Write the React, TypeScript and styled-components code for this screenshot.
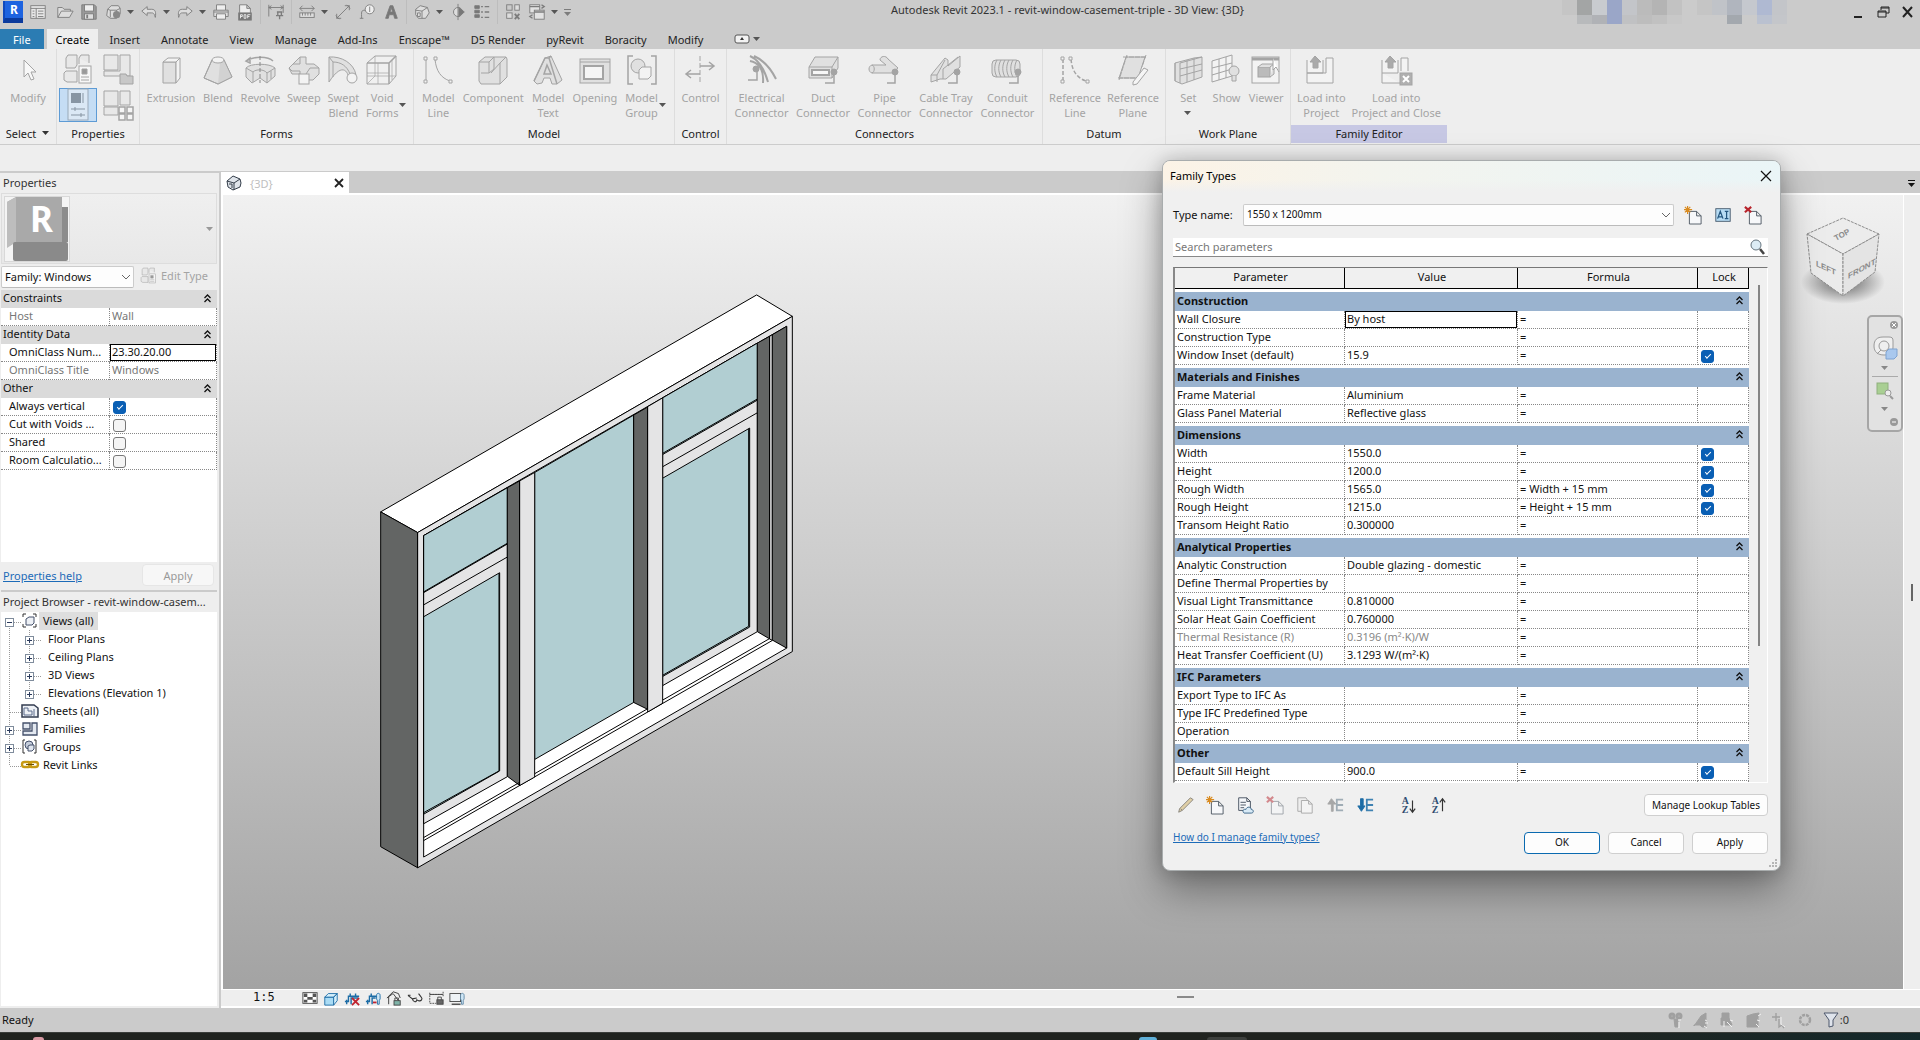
import React, { useState } from 'react';
import styled, { createGlobalStyle, css } from 'styled-components';

const GlobalStyle = createGlobalStyle`
  *, *::before, *::after { box-sizing: border-box; }
  html, body, #root { margin: 0; height: 100%; }
  body { overflow: hidden; background: #eeeeee; }
  body, button, input, select {
    font-family: "Noto Sans", "Open Sans", sans-serif;
    font-size: 11px;
    line-height: 15px;
    color: #111111;
  }
  button { border: 0; padding: 0; background: none; color: inherit; }
  table { border-collapse: separate; border-spacing: 0; }
  th { font-weight: 400; text-align: left; }
`;

/* ---------- drawing helpers ---------- */

const Drawing = styled.svg<{ $size?: number }>`
  display: block;
  flex: none;
  width: ${(p) => p.$size ?? 20}px;
  height: ${(p) => p.$size ?? 20}px;
  overflow: visible;
  fill: none;
  stroke: currentColor;
  stroke-width: 1;
`;

type Art = Record<string, React.ReactNode>;

const quickArt: Art = {
  home: <><rect x="2" y="3" width="16" height="14" fill="#e8e8e8" /><path d="M2 6h16M8 6v11M4 9h2M4 12h2M4 15h2M10 9h6M10 12h6M10 15h6" /></>,
  open: <path d="M2 16V5h5l2 2h7v2M2 16l4-7h13l-4 7H2z" fill="#dddddd" />,
  save: <><path d="M2 2h14l2 2v14H2z" fill="#999999" /><rect x="5" y="2" width="10" height="7" fill="#eeeeee" /><rect x="5" y="12" width="10" height="6" fill="#dddddd" /><path d="M8 13v4" strokeWidth="2" /></>,
  cloud: <><path d="M4 7l4-4h8l2 3v6l-4 5H7l-4-3z" fill="#dddddd" /><path d="M7 8h7v8M7 8v8M4 7l3 1M14 8l4-2" /><circle cx="14" cy="13" r="4" fill="#888888" stroke="none" /></>,
  undo: <path d="M2 9l6-5v3h5c4 0 5 3 4 9-1-4-2-5-4-5H8v3z" fill="#dddddd" />,
  redo: <path d="M18 9l-6-5v3H7c-4 0-5 3-4 9 1-4 2-5 4-5h5v3z" fill="#dddddd" />,
  print: <><path d="M5 8V2h10v6" fill="#eeeeee" /><path d="M2 8h16v7H2z" fill="#dddddd" /><path d="M5 12h10v6H5z" fill="#eeeeee" /><path d="M2 10h16" /></>,
  pdf: <><path d="M4 11V2h8l4 4v5M12 2v4h4" fill="#eeeeee" /><rect x="3" y="11" width="14" height="8" fill="#777777" /><path d="M5 17v-4h2v2H5M9 13v4h2v-4zM13 17v-4h3M13 15h2" stroke="#eeeeee" /></>,
  align: <><path d="M2 2v13M18 2v9M2 5h16M5 3L2 5l3 2M15 3l3 2-3 2" /><path d="M11 10h6M12 10v4h4v-4M10 14h8M14 14v4" strokeWidth="1.5" /></>,
  measure: <><path d="M2 6h16M5 3L2 6l3 3M15 3l3 3-3 3" /><rect x="2" y="11" width="16" height="5" fill="#dddddd" /><path d="M5 11v3M8 11v3M11 11v3M14 11v3" /></>,
  dim: <path d="M3 17L17 3M3 12v5h5M12 3h5v5M6 18l-4-4M14 2l4 4" />,
  tag: <><circle cx="13" cy="7" r="5" fill="#eeeeee" /><path d="M13 4v6M8 8c-5 0-4 2-4 9M2 17h4" /></>,
  text: <path d="M4 17L9 3h3l5 14h-3l-1-4H8l-1 4zM9 10h3l-2-5z" fill="#777777" />,
  house: <><path d="M3 7l5-4 8 2 2 6-4 6H6l-3-4z" fill="#dddddd" /><path d="M3 8l7 1 6-4M10 9v8M5 11h3v4H5z" /></>,
  section: <><circle cx="10" cy="10" r="5" fill="#dddddd" /><path d="M10 1v18" /><path d="M11 5l6 5-6 5z" fill="#777777" /></>,
  thin: <><path d="M2 3h5v3H2zM2 8h5v3H2zM2 13h5v3H2z" fill="#777777" /><path d="M9 4h2M13 4h5M9 10h2M13 10h5M9 16h2M13 16h5" strokeWidth="1.5" /></>,
  close: <><rect x="3" y="2" width="6" height="6" /><rect x="12" y="2" width="5" height="6" fill="#dddddd" /><rect x="3" y="11" width="6" height="6" fill="#dddddd" /><path d="M12 12l5 6M17 12l-5 6" strokeWidth="2" /></>,
  windows: <><rect x="2" y="2" width="11" height="9" fill="#e2e2e2" /><rect x="7" y="8" width="11" height="10" fill="#e2e2e2" /><path d="M2 4h11M7 10h11M15 2l3 2-3 2M5 13l-3 2 3 2" strokeWidth="1.5" /></>,
};

const F = '#e0e0e0';
const ribbonArt: Art = {
  modify: <path d="M12 6v17l4-4 3 7 3-1-3-7h5z" fill="#f8f8f8" />,
  extrusion: <><path d="M8 8h13v21H8z" fill={F} /><path d="M8 8l5-4h12l-4 4zM21 8l4-4v20l-4 5z" fill="#f3f3f3" /></>,
  blend: <><path d="M10 6L2 24l14 6 14-7L22 6z" fill={F} /><path d="M18 8l-2 22 14-7-8-17z" fill="#d2d2d2" stroke="none" /><ellipse cx="16" cy="6" rx="6" ry="3" fill="#f3f3f3" /><path d="M10 6L2 24l14 6 14-7L22 6" /></>,
  revolve: <><path d="M2 14c4-5 24-5 29 0v8l-8 7-7-5-8 5-6-6z" fill={F} /><path d="M2 14l7 4v10M31 14l-8 5v10M9 18c3-3 11-3 14 1M27 17v8" /><path d="M2 7c8-5 22-5 27 0M2 7l4-3v5z" strokeWidth="1.5" /><path d="M16 2v27" strokeDasharray="4 2" stroke="#888888" /></>,
  sweep: <><path d="M1 14l11-11h6v7h8l5 4v6l-6 6H12v-6H4z" fill={F} /><path d="M1 14l3 3h8v4M12 3v7H5M31 14h-9l-4 6" /><rect x="11" y="20" width="10" height="10" fill="#f3f3f3" /></>,
  swept: <><path d="M2 3c12-1 25 6 27 18h-8C19 15 13 11 2 28z" fill={F} /><path d="M2 3l4 5v15M6 8c8 0 14 4 17 12" /><circle cx="25" cy="24" r="5" fill="#f3f3f3" /></>,
  voids: <><path d="M1 9l8-7h21v20l-7 8H1z" fill="#f0f0f0" /><path d="M1 9h22v21M23 9l7-7" strokeWidth="1.5" /><path d="M9 2v20H1M9 22h21M1 30l8-8M12 9v21M1 19h22M26 6v20" strokeWidth=".7" /></>,
  line: <><path d="M4 5v22M13 5c1 12 6 19 15 22" /><path d="M2 3h3v3H2zM2 26h3v3H2zM12 3h3v3h-3zM27 26h3v3h-3z" fill="#f3f3f3" /></>,
  component: <><path d="M2 27V8l6-5h21l1 2v18l-7 7H4z" fill={F} /><path d="M2 8h10v11H4M12 8l5-5M23 30V9l6-6M17 3v12l-5 4M14 19l9-10" /></>,
  mtext: <><path d="M2 27L13 4l6-2 11 24-5 4h-5l-2-6h-6l-2 5-5 1z" fill={F} /><path d="M2 27L13 4h4l8 26M12 20l3-9 4 9zM17 4l2-2" strokeWidth="1.5" /></>,
  opening: <><rect x="1" y="5" width="30" height="24" fill={F} /><rect x="5" y="12" width="19" height="13" fill="#f5f5f5" strokeWidth="2" /><path d="M1 8h30" /></>,
  group: <><path d="M7 2H2v28h5M25 2h5v28h-5" strokeWidth="1.5" /><circle cx="12" cy="12" r="7" fill={F} /><path d="M13 16l3-3h9v9l-3 3h-9z" fill="#f3f3f3" /></>,
  control: <><path d="M16 2v28" strokeDasharray="5 2" /><path d="M16 12h13M25 8l5 4-5 4M16 20H3M7 16l-5 4 5 4" strokeWidth="1.5" /></>,
  electrical: <><path d="M4 2c9 4 14 12 18 26M8 2c9 4 17 13 22 23M4 7c10 2 14 9 13 22" strokeWidth="2" /><path d="M2 26h9V14" strokeWidth="1.5" /><circle cx="10" cy="15" r="3" fill="#a4a4a4" /></>,
  duct: <><path d="M2 13l6-10h23v11l-6 10H2z" fill={F} /><path d="M2 13h23v11M25 13l6-10" /><rect x="5" y="16" width="17" height="5" fill="#f7f7f7" strokeWidth="2" /><path d="M27 18v11h-9" strokeWidth="1.5" /><circle cx="27" cy="18" r="3" fill="#a4a4a4" /></>,
  pipe: <><path d="M12 6c0-4 6-5 8-1l10 9-6 5H4c-4-1-4-7 0-8h14z" fill={F} /><path d="M4 11c3 1 3 7 0 8" /><path d="M27 19v10h-8" strokeWidth="1.5" /><circle cx="27" cy="18" r="3" fill="#a4a4a4" /></>,
  tray: <><path d="M1 21L15 4l3 2v6L30 2v11L16 25h-6l-9 3z" fill={F} /><path d="M1 21h6l8-15M7 21v7M13 25V15L28 3" /><path d="M27 18v11h-9" strokeWidth="1.5" /><circle cx="27" cy="18" r="3" fill="#a4a4a4" /></>,
  conduit: <><rect x="1" y="6" width="28" height="17" rx="4" fill={F} /><path d="M6 6c-3 5-3 12 0 17M10 6c-3 5-3 12 0 17M14 6c-3 5-3 12 0 17M18 6c-3 5-3 12 0 17M22 6c-3 5-3 12 0 17M26 6c-3 5-3 12 0 17" /><path d="M27 18v11h-9" strokeWidth="1.5" /><circle cx="27" cy="18" r="3" fill="#a4a4a4" /></>,
  refline: <><path d="M4 5v22M12 5c1 12 6 19 15 22" strokeDasharray="4 2" strokeWidth="1.5" /><path d="M2 3h3v3H2zM2 26h3v3H2zM10 3h3v3h-3zM27 26h3v3h-3z" fill="#f3f3f3" /></>,
  refplane: <><path d="M9 3h19l-7 21H2z" fill={F} /><path d="M6 3h24M1 24h20M10 1L2 26M29 1l-4 12" strokeDasharray="5 1" /><path d="M16 28l11-14 4 2-11 14-4 1z" fill="#f5f5f5" /></>,
  set: <><path d="M3 9l19-5 8-1v20L10 30l-7-3z" fill={F} /><path d="M8 9v20M8 15l22-5M8 22l22-6M15 6v22M22 4v22M3 9v18M8 9L30 3" /></>,
  show: <><path d="M1 7l20-6v21L1 28z" fill="#f3f3f3" /><path d="M1 14l20-5M1 21l20-6M8 5v21M15 3v21" /><circle cx="23" cy="17" r="5" fill={F} /><path d="M21 22v5h4v-5" fill={F} /></>,
  viewer: <><rect x="2" y="3" width="27" height="26" fill="#f3f3f3" /><path d="M2 5h27" strokeWidth="3" /><rect x="8" y="13" width="12" height="10" fill="#bbbbbb" /><path d="M8 13l4-3h12l-4 3M20 23l4-3V10" fill={F} /><path d="M23 4v12l3-3 3 5" fill="#ffffff" /></>,
  load: <><path d="M2 6v13h16V6M2 19v10h26V4h-7v15" fill="#f3f3f3" /><path d="M10 2L5 8h3v6h5V8h3z" fill="#aaaaaa" /><path d="M2 19h19" /></>,
  loadclose: <><path d="M2 6v13h16V6M2 19v10h18M28 17V4h-7v13" fill="#f3f3f3" /><path d="M10 2L5 8h3v6h5V8h3z" fill="#aaaaaa" /><rect x="20" y="19" width="12" height="12" fill="#b0b0b0" /><path d="M23 22l6 6M29 22l-6 6" stroke="#ffffff" strokeWidth="2" /></>,
  ptypes: <><path d="M4 5l2-3h9v10l-2 3H4zM17 5l2-3h8v8M4 18h11v11H5l-3-2v-7z" fill="#e8e8e8" /><path d="M17 5v6" /><rect x="17" y="13" width="12" height="17" fill="#f7f7f7" /><path d="M20 16h5v5h-5z" fill="#999999" /><path d="M19 24h8M19 27h8" /></>,
  pcategory: <><path d="M2 2h14v15H2zM18 2h10v21H2v-5h16z" fill="#e8e8e8" /><path d="M18 21h6l1 2h6v8H18z" fill="#c8c8c8" /></>,
  props: <><rect x="6" y="0" width="20" height="31" fill="#dbe8f5" stroke="#9aa9b8" /><rect x="9" y="4" width="10" height="10" fill="#8795a3" stroke="none" /><path d="M21 4v10M9 20h14M9 26h14M13 18v4M19 24v4" stroke="#8795a3" /></>,
  pgrid: <><path d="M2 2h14v15H2zM18 2h10v14H18zM2 18h14v8H2z" fill="#e8e8e8" /><path d="M17 18h6v6h-6zM25 18h6v6h-6zM17 25h6v6h-6zM25 25h6v6h-6z" fill="#f5f5f5" strokeWidth="1.5" /></>,
};

const doc = <path d="M6 6h8l5 5v9H6zM14 6v5h5" fill="#f7f8fa" stroke="#4a5560" />;
const star = <path d="M4 0v9M0 4h9M1 1l6 6M7 1L1 7" stroke="#d98a1e" strokeWidth="1.3" />;
const dialogArt: Art = {
  newType: <>{doc}{star}</>,
  rename: <><rect x="2" y="3" width="16" height="14" fill="#b7dcf4" stroke="#44586b" /><path d="M4 14l3-8 3 8M5 12h4M12 6h4M14 6v8M12 14h4" stroke="#23567f" strokeWidth="1.4" /></>,
  deleteType: <>{doc}<path d="M1 1l7 6M8 1L1 7" stroke="#b8242c" strokeWidth="2.4" /></>,
  pencil: <path d="M3 18l1-4L16 2l3 2L7 16zM5 14l2 2" fill="#e0cfa6" stroke="#85817a" />,
  shared: <><path d="M3 2h9l4 4v10H3zM12 2v4h4" fill="#f5f7fa" stroke="#3f4b59" /><path d="M5 7h6M5 10h6M5 13h4" stroke="#3f4b59" /><path d="M9 19c-3-3 0-5 2-4 1-4 6-3 6 0 3 0 3 4 0 4z" fill="#d8eaf6" stroke="#356184" /></>,
  del: <g opacity=".5">{doc}<path d="M1 1l7 6M8 1L1 7" stroke="#b8242c" strokeWidth="2.4" /></g>,
  copy: <g opacity=".6"><path d="M2 2h9l2 3v12H2z" fill="#eeeeee" stroke="#777777" /><path d="M6 5h8l4 4v10H6zM14 5v4h4" fill="#f7f7f7" stroke="#777777" /></g>,
  up: <g opacity=".6"><path d="M6 17V9H2l4-6 5 6H8v8z" fill="#777777" stroke="#777777" /><path d="M12 3v14M12 4h7M12 10h7M12 16h7" stroke="#6b7f8e" strokeWidth="2" /></g>,
  down: <><path d="M5 3v8H2l4 6 4-6H8V3z" fill="#1c6ca6" stroke="#1c6ca6" /><path d="M12 3v14M12 4h7M12 10h7M12 16h7" stroke="#3f82b2" strokeWidth="2" /></>,
};
const sortLetters = (
  <g stroke="none" fill="#2f4c70" fontFamily="Liberation Serif, serif" fontSize="11" fontWeight="700">
    <text x="3" y="9">A</text><text x="3" y="19">Z</text>
  </g>
);
dialogArt.az = <>{sortLetters}<path d="M15 5v13M12 14l3 4 3-4" stroke="#333333" strokeWidth="1.3" /></>;
dialogArt.za = <>{sortLetters}<path d="M15 17V3M12 7l3-4 3 4" stroke="#333333" strokeWidth="1.3" /></>;

const viewArt: Art = {
  detail: <><rect x="1" y="3" width="16" height="12" fill="#ffffff" /><path d="M2 4h4v4H2zM12 4h4v4h-4zM6 8h6v3H6zM2 11h4v3H2zM12 11h4v3h-4z" fill="#555555" stroke="none" /></>,
  style: <><path d="M2 8h10v9H2z" fill="#aadcf5" stroke="#1c6ca6" /><path d="M2 8l4-4h10l-4 4zM12 8l4-4v8l-4 5z" fill="#d5effb" stroke="#1c6ca6" /></>,
  sun: <><path d="M1 13h4V7h12M7 4v4M13 4v4M3 11v5M8 16V9h8" stroke="#1c6ca6" strokeWidth="1.6" /><path d="M9 9l8 8M17 9l-8 8" stroke="#c02430" strokeWidth="2" /></>,
  shadow: <><path d="M1 13h4V7h9M7 4v4M3 11v5M8 16V9h4" stroke="#1c6ca6" strokeWidth="1.6" /><path d="M9 14h4" stroke="#c02430" strokeWidth="2" /><path d="M13 6c0-3 4-3 4 0v4l-1 2v4h-2v-4l-1-2z" fill="#cfe6f5" stroke="#1c6ca6" /></>,
  crop: <><path d="M3 16V7l5-5 6 2 2 5M1 9l7-5 6 8" stroke="#333333" /><rect x="9" y="12" width="7" height="5" fill="#7fb3a8" /><path d="M10 12V9h4v3" /></>,
  glasses: <><path d="M1 6l5 4c1 4 5 4 5 1l2 1c3 1 5-2 3-4L13 4M1 6l3 0M6 10l5-1" stroke="#333333" strokeWidth="1.2" /></>,
  constraint: <><path d="M2 3v12M17 2v5M2 5h15M2 15h7" strokeDasharray="2 1" /><path d="M2 5h15" /><rect x="10" y="11" width="7" height="5" fill="#666666" /><path d="M11 11V8h4v3" /></>,
  hidden: <><rect x="1" y="4" width="12" height="9" fill="#eef2f5" /><path d="M3 16h10" strokeWidth="1.5" /><path d="M13 6c0-3 4-3 4 0v4l-1 2v4h-2v-4l-1-2z" fill="#cfe6f5" stroke="#5d86a5" /></>,
};

const statusArt: Art = {
  a: <><circle cx="6" cy="5" r="2" strokeWidth="3" /><circle cx="13" cy="5" r="2" strokeWidth="3" /><path d="M8 8h4v8H9z" fill="currentColor" /><path d="M13 11v6M12 9h3" stroke="#f2f2f2" /></>,
  b: <><path d="M2 15l7-10 5-3v14h-4l-2-2H2z" fill="currentColor" /><path d="M13 9l2 1M13 12h3M12 15l3 2" stroke="#f2f2f2" /></>,
  c: <><path d="M4 2h7v5l3 7H3V7h1z" fill="currentColor" /><path d="M6 10v6M9 11l5 5M12 9l3 1" stroke="#f2f2f2" /></>,
  d: <><path d="M3 5l6-2 6-1-1 5v9H3z" fill="currentColor" /><path d="M14 5l3-2M13 9l3 1M12 13l3 3" stroke="#f2f2f2" /></>,
  e: <><path d="M2 6h8M6 2v8M9 8v8l3-2 2 3" strokeWidth="1.4" /><path d="M11 6v7l4 3" stroke="#f2f2f2" /></>,
  f: <circle cx="9" cy="9" r="5" strokeWidth="2.5" strokeDasharray="3 1" />,
};

const treeArt: Art = {
  views: <><path d="M5 2H2v3M12 2h3v3M5 15H2v-3M12 15h3v-3" stroke="#333333" /><path d="M5 7l3-2h5v6l-2 2H5z" fill="#eef1f6" stroke="#44506b" /></>,
  sheets: <><path d="M1 3h12l4 3v9H1z" fill="#eef1f6" stroke="#333c50" strokeWidth="1.5" /><path d="M3 13V6h4v3h4v4zM13 7v7" stroke="#5d6d8c" /></>,
  families: <path d="M2 3h7v6H2zM11 3h5v12H2v-4h9z" fill="#e3e8f0" stroke="#44506b" strokeWidth="1.3" />,
  groups: <><path d="M4 2H2v13h2M13 2h2v13h-2" stroke="#333333" /><circle cx="8" cy="7" r="4" fill="#c5cddb" stroke="#44506b" /><path d="M7 8l2-1h4v4l-2 2H7z" fill="#dfe5ee" stroke="#44506b" /></>,
  links: <><rect x="1" y="6" width="9" height="5" rx="2.5" stroke="#c79a12" strokeWidth="2.4" /><rect x="8" y="6" width="9" height="5" rx="2.5" stroke="#c79a12" strokeWidth="2.4" /><path d="M5 8.500h8" stroke="#6d5206" /></>,
};

const Caret = ({ color = '#555555' }: { color?: string }) => (
  <Drawing $size={8} viewBox="0 0 8 8" aria-hidden="true">
    <path d="M0 2h7L3.500 6z" fill={color} stroke="none" />
  </Drawing>
);

const Collapse = () => (
  <Drawing $size={9} viewBox="0 0 9 9" aria-hidden="true">
    <path d="M1.500 4l3-3 3 3M1.500 8l3-3 3 3" stroke="#111111" strokeWidth="1.3" />
  </Drawing>
);

/* ---------- application frame ---------- */

const Shell = styled.div`
  position: relative;
  display: flex;
  flex-direction: column;
  height: 100vh;
  background: #eeeeee;
`;

const TitleBar = styled.header`
  display: flex;
  flex: none;
  height: 29px;
  background: #cbcbcb;
`;

const QuickAccess = styled.div`
  display: flex;
  flex: none;
  align-items: center;
  height: 24px;
  padding-left: 3px;
  color: #7c7c7c;
`;

const AppMark = styled.div`
  display: grid;
  place-items: center;
  width: 20px;
  height: 22px;
  border-bottom: 5px solid #0b3a9c;
  border-left: 2px solid #0f49bd;
  background: #1d63e0;
  color: #ffffff;
  font-size: 12px;
  line-height: 15px;
  font-weight: 700;
`;

const QuickButton = styled.button<{ $wide?: boolean }>`
  display: grid;
  place-items: center;
  width: ${(p) => (p.$wide ? 30 : 24)}px;
  height: 24px;
`;

const QuickArrow = styled.button`
  display: grid;
  place-items: center;
  width: 12px;
  height: 24px;
`;

const QuickRule = styled.span`
  width: 1px;
  height: 24px;
  margin: 0 3px;
  background: #bdbdbd;
`;

const Caption = styled.h1`
  flex: 1;
  margin: 0;
  text-align: center;
  font-size: 11px;
  line-height: 19px;
  font-weight: 400;
  color: #333333;
`;

const Mosaic = styled.div`
  display: grid;
  grid-template-columns: repeat(15, 15px);
  grid-template-rows: 15px 9px;
  flex: none;
  margin-right: 58px;
`;

const Tile = styled.span<{ $tone: string }>`
  background: ${(p) => p.$tone};
`;

const WindowButton = styled.button`
  display: grid;
  place-items: center;
  width: 25px;
  height: 24px;
  color: #222222;
`;

const TabRow = styled.nav`
  display: flex;
  flex: none;
  gap: 1px;
  height: 20px;
  background: #cbcbcb;
`;

const RibbonTab = styled.button<{ $kind?: 'file' | 'active' }>`
  padding: 0 10px;
  line-height: 19px;
  color: #222222;
  ${(p) => p.$kind === 'file' && css`
    padding: 0 13px;
    margin-right: 2px;
    background: #2b7cb3;
    color: #ffffff;
  `}
  ${(p) => p.$kind === 'active' && css`
    padding: 0 9px;
    background: #eeeeee;
    color: #000000;
  `}
`;

const TabToggle = styled.button`
  display: flex;
  align-items: center;
  gap: 3px;
  margin-left: 20px;
`;

const RibbonBar = styled.div`
  display: flex;
  flex: none;
  height: 96px;
  border-bottom: 1px solid #cccccc;
  background: #eeeeee;
`;

const PanelBox = styled.section<{ $width: number }>`
  display: flex;
  flex-direction: column;
  flex: none;
  width: ${(p) => p.$width}px;
  border-right: 1px solid #dddddd;
  &:last-child { border-right: 0; }
`;

const PanelTools = styled.div<{ $arrow?: boolean }>`
  display: flex;
  justify-content: space-evenly;
  height: 76px;
  padding: 5px ${(p) => (p.$arrow ? 8 : 0)}px 0 0;
`;

const PanelTitle = styled.h2<{ $accent?: boolean }>`
  display: flex;
  align-items: center;
  justify-content: center;
  gap: 6px;
  margin: 0;
  height: 18px;
  padding-bottom: 2px;
  font-size: 11px;
  font-weight: 400;
  color: #222222;
  background: ${(p) => (p.$accent ? '#c7c8e4' : 'transparent')};
`;

const ToolButton = styled.button`
  position: relative;
  display: flex;
  flex-direction: column;
  align-items: center;
  gap: 4px;
  color: #a4a4a4;
`;

const ToolLabel = styled.span`
  white-space: pre-line;
  text-align: center;
  line-height: 15px;
`;

const CornerArrow = styled.span`
  position: absolute;
  right: -9px;
  top: 47px;
`;

const SmallTools = styled.div`
  display: grid;
  grid-template-columns: 38px 38px;
  grid-auto-rows: 34px;
  gap: 2px;
  margin-top: -2px;
  height: 70px;
`;

const SmallTool = styled.button<{ $on?: boolean }>`
  display: grid;
  place-items: center;
  color: #a4a4a4;
  border: 1px solid ${(p) => (p.$on ? '#5d9bd5' : 'transparent')};
  background: ${(p) => (p.$on ? '#c5ddf4' : 'transparent')};
`;

const OptionsBar = styled.div`
  flex: none;
  height: 28px;
  background: #eeeeee;
  border-bottom: 2px solid #cbcbcb;
`;

const Workspace = styled.main`
  display: flex;
  flex: 1;
  min-height: 0;
`;

/* ---------- left palettes ---------- */

const Palettes = styled.aside`
  display: flex;
  flex-direction: column;
  flex: none;
  width: 221px;
  padding: 0 2px 2px 1px;
  border-right: 2px solid #cbcbcb;
  background: #eeeeee;
`;

const PaletteTitle = styled.h2`
  margin: 0;
  padding-left: 2px;
  height: 20px;
  overflow: hidden;
  white-space: nowrap;
  text-overflow: ellipsis;
  font-size: 11px;
  line-height: 20px;
  font-weight: 400;
  color: #333333;
`;

const TypeSelector = styled.button`
  display: flex;
  align-items: center;
  justify-content: space-between;
  height: 71px;
  padding: 0 2px;
  border: 1px solid #dddddd;
  background: linear-gradient(#efefef, #e8e8e8);
`;

const TypeRow = styled.div`
  display: flex;
  align-items: center;
  gap: 6px;
  height: 26px;
`;

const SelectBox = styled.div<{ $grow?: boolean }>`
  position: relative;
  ${(p) => (p.$grow ? 'flex: 1;' : 'flex: none; width: 133px;')}
  height: 22px;
  select {
    appearance: none;
    display: block;
    width: 100%;
    height: 100%;
    padding: 0 3px 1px;
    border: 1px solid #cccccc;
    border-bottom-color: #bbbbbb;
    border-radius: 2px;
    background: #fdfdfd;
    font-size: ${(p) => (p.$grow ? 10 : 11)}px;
  }
  svg {
    position: absolute;
    right: 3px;
    top: 6px;
    pointer-events: none;
  }
`;

const EditType = styled.button`
  display: flex;
  align-items: center;
  gap: 4px;
  padding-bottom: 3px;
  color: #a4a4a4;
`;

const PropertyArea = styled.div`
  height: 272px;
  background: #ffffff;
`;

const PropertyTable = styled.table`
  width: 100%;
  table-layout: fixed;
  td, th { height: 18px; padding: 0; line-height: 15px; vertical-align: top; }
`;

const GroupCell = styled.th`
  background: #dadada;
  div {
    display: flex;
    align-items: center;
    justify-content: space-between;
    padding: 0 5px 0 2px;
    line-height: 16px;
  }
`;

const NameCell = styled.th<{ $muted?: boolean }>`
  color: ${(p) => (p.$muted ? '#777777' : '#111111')};
  border-bottom: 1px dotted #888888;
  && { padding-left: 8px; }
  overflow: hidden;
  white-space: nowrap;
  text-overflow: ellipsis;
`;

const FieldCell = styled.td<{ $muted?: boolean; $boxed?: boolean }>`
  color: ${(p) => (p.$muted ? '#777777' : '#111111')};
  border-bottom: 1px dotted #888888;
  border-left: 1px dotted #888888;
  border-right: 1px dotted #888888;
  && { padding-left: ${(p) => (p.$boxed ? 0 : 2)}px; }
`;

const CellInput = styled.input`
  display: block;
  width: 100%;
  height: 17px;
  padding: 0 1px 2px;
  border: 1px solid #000000;
  outline: 0;
  background: #ffffff;
`;

const Check = styled.input`
  appearance: none;
  display: block;
  position: relative;
  width: 13px;
  height: 13px;
  margin: 3px 0 0 1px;
  border: 1px solid #777777;
  border-radius: 3px;
  background: #f5f5f5;
  &:checked { background: #0a5fb4; border-color: #0a5fb4; }
  &:checked::after {
    content: "";
    position: absolute;
    left: 3px;
    top: 3px;
    width: 6px;
    height: 3px;
    border-left: 1px solid #ffffff;
    border-bottom: 1px solid #ffffff;
    transform: rotate(-45deg);
  }
`;

const HelpRow = styled.div`
  display: flex;
  align-items: center;
  justify-content: space-between;
  height: 30px;
  padding: 0 3px 2px 2px;
  border-bottom: 2px solid #cbcbcb;
`;

const HelpLink = styled.a<{ $small?: boolean }>`
  font-size: ${(p) => (p.$small ? 10 : 11)}px;
  color: #1c6bb8;
  text-decoration: underline;
`;

const PushButton = styled.button<{ $width: number; $tone?: 'primary' | 'disabled' }>`
  width: ${(p) => p.$width}px;
  height: 22px;
  border: 1px solid ${(p) => (p.$tone === 'primary' ? '#0a6ab0' : p.$tone === 'disabled' ? '#e6e6e6' : '#cfcfcf')};
  border-radius: 4px;
  background: ${(p) => (p.$tone === 'disabled' ? '#f7f7f7' : '#fdfdfd')};
  color: ${(p) => (p.$tone === 'disabled' ? '#999999' : '#111111')};
  font-size: ${(p) => (p.$tone === 'disabled' ? 11 : 10)}px;
  line-height: 19px;
`;

const Tree = styled.ul`
  flex: 1;
  margin: 0;
  padding: 0;
  list-style: none;
  background: #ffffff;
`;

const TreeRow = styled.li`
  display: flex;
  align-items: center;
  height: 18px;
`;

const TreeLabel = styled.span<{ $selected?: boolean; $child?: boolean }>`
  height: 18px;
  padding: 0 4px;
  line-height: 17px;
  margin-left: ${(p) => (p.$child ? 3 : 0)}px;
  background: ${(p) => (p.$selected ? '#dedede' : 'transparent')};
`;

const BranchArt = styled.svg`
  display: block;
  flex: none;
  width: 20px;
  height: 18px;
  fill: none;
  stroke: #999999;
`;

type BranchProps = { from?: number; to?: number; arm?: boolean; box?: '+' | '-' };
const Branch = ({ from = 0, to = 18, arm, box }: BranchProps) => (
  <BranchArt viewBox="0 0 20 18" aria-hidden="true">
    <path d={`M8.500 ${from}V${to}`} strokeDasharray="1 1" />
    {arm && <path d="M9 10.500H20" strokeDasharray="1 1" />}
    {box && (
      <>
        <rect x="4.500" y="6.500" width="8" height="8" fill="#ffffff" stroke="#7f8c9c" />
        <path d={box === '+' ? 'M6 10.500h5M8.500 8v5' : 'M6 10.500h5'} stroke="#2a3a5c" />
      </>
    )}
  </BranchArt>
);

/* ---------- drawing area ---------- */

const ViewColumn = styled.section`
  display: flex;
  flex: 1;
  flex-direction: column;
  min-width: 0;
`;

const ViewTabs = styled.div`
  display: flex;
  flex: none;
  align-items: center;
  justify-content: space-between;
  height: 22px;
  padding-right: 4px;
  border-bottom: 2px solid #ffffff;
  background: #cbcbcb;
`;

const ViewTab = styled.div`
  display: flex;
  align-items: center;
  gap: 8px;
  width: 128px;
  height: 22px;
  padding: 0 5px;
  background: #ffffff;
  color: #c0c0c0;
  span { flex: 1; }
`;

const CanvasRow = styled.div`
  display: flex;
  flex: 1;
  min-height: 0;
  border-left: 2px solid #ffffff;
`;

const Canvas = styled.div`
  position: relative;
  flex: 1;
  border-right: 1px solid #ffffff;
  background: linear-gradient(#f1f1f1, #a3a3a3);
`;

const RightRail = styled.div`
  display: flex;
  align-items: center;
  justify-content: center;
  flex: none;
  width: 16px;
  background: #eeeeee;
  &::after {
    content: "";
    width: 2px;
    height: 17px;
    background: #666666;
  }
`;

const WindowModel = styled.svg`
  position: absolute;
  left: 137px;
  top: 85px;
  width: 450px;
  height: 600px;
  fill: none;
  stroke: #000000;
  shape-rendering: crispEdges;
  path { vector-effect: non-scaling-stroke; stroke-width: 1; }
`;

const ViewCube = styled.svg`
  position: absolute;
  right: 14px;
  top: 13px;
  width: 96px;
  height: 100px;
`;

const NavBar = styled.div`
  position: absolute;
  right: 0;
  top: 120px;
  display: flex;
  flex-direction: column;
  align-items: center;
  gap: 4px;
  width: 36px;
  height: 117px;
  padding: 3px 2px;
  border: 2px solid #a6a6a6;
  border-radius: 5px;
  background: #e2e2e2;
  color: #999999;
  button { display: block; }
  hr { width: 26px; margin: 0; border: 0; border-top: 1px solid #aaaaaa; }
`;

const NavCorner = styled.button`
  align-self: flex-end;
`;

const ViewControls = styled.div`
  display: flex;
  flex: none;
  align-items: center;
  height: 19px;
  padding: 0 16px 2px 32px;
  border-top: 1px solid #ffffff;
  border-bottom: 2px solid #ffffff;
  background: #eeeeee;
  color: #444444;
`;

const ScaleText = styled.span`
  width: 46px;
  font-family: "DejaVu Sans Mono", monospace;
  font-size: 12px;
  color: #111111;
`;

const ControlButton = styled.button`
  display: grid;
  place-items: center;
  width: 21px;
  height: 14px;
`;

const BottomRail = styled.div`
  flex: 1;
  display: flex;
  justify-content: center;
  &::after {
    content: "";
    width: 17px;
    height: 2px;
    background: #8a8a8a;
  }
`;

const StatusBar = styled.footer`
  display: flex;
  flex: none;
  align-items: center;
  justify-content: space-between;
  height: 24px;
  padding: 0 71px 1px 2px;
  background: #cbcbcb;
`;

const StatusIcons = styled.div`
  display: flex;
  align-items: center;
  gap: 8px;
  color: #a0a0a0;
  span { display: flex; align-items: center; color: #333333; }
`;

const Taskbar = styled.div`
  display: flex;
  align-items: flex-end;
  flex: none;
  height: 8px;
  padding-left: 33px;
  border-top: 1px solid #3a3d3a;
  background: linear-gradient(90deg, #20231f 80%, #14292b);
`;

const TaskHint = styled.span<{ $width: number; $gap: number; $tone: string }>`
  width: ${(p) => p.$width}px;
  height: 3px;
  margin-left: ${(p) => p.$gap}px;
  border-radius: 4px 4px 0 0;
  background: ${(p) => p.$tone};
`;

/* ---------- Family Types dialog ---------- */

const Dialog = styled.div`
  position: absolute;
  right: 139px;
  top: 160px;
  display: flex;
  flex-direction: column;
  width: 619px;
  padding-bottom: 15px;
  border: 1px solid #a8acad;
  border-radius: 8px;
  background: #f0f0f0;
  box-shadow: 0 18px 40px rgba(0, 0, 0, 0.38), 0 0 18px rgba(0, 0, 0, 0.18);
`;

const DialogTitle = styled.div`
  display: flex;
  align-items: center;
  justify-content: space-between;
  height: 31px;
  padding: 0 5px 2px 7px;
  border-radius: 7px 7px 0 0;
  background: linear-gradient(180deg, transparent 60%, #f0f0f0), linear-gradient(90deg, #fcf3e6, #f3f4ee 35%, #eaf5f7);
  h2 { margin: 0; font-size: 11px; font-weight: 400; color: #000000; }
  button { width: 18px; height: 18px; display: grid; place-items: center; }
`;

const DialogBody = styled.div`
  display: flex;
  flex-direction: column;
  padding: 12px 12px 0 10px;
`;

const NameRow = styled.div`
  display: flex;
  align-items: center;
  label { width: 70px; padding-bottom: 2px; }
`;

const IconButton = styled.button`
  display: grid;
  place-items: center;
  flex: none;
  width: 30px;
  height: 20px;
`;

const NameActions = styled.div`
  display: flex;
  margin-left: 4px;
`;

const SearchBox = styled.div`
  display: flex;
  align-items: center;
  height: 19px;
  margin: 12px 0 10px;
  padding: 0 2px;
  border-bottom: 1px solid #888888;
  background: #ffffff;
  input {
    flex: 1;
    border: 0;
    padding: 0 0 2px;
    outline: 0;
    background: transparent;
    &::placeholder { color: #777777; opacity: 1; }
  }
`;

const GridFrame = styled.div`
  display: flex;
  align-items: flex-start;
  height: 516px;
  overflow: hidden;
  border-top: 1px solid #777777;
  border-left: 2px solid #888888;
  border-right: 1px solid #ffffff;
  border-bottom: 1px solid #ffffff;
`;

const ParameterGrid = styled.table`
  flex: 1;
  table-layout: fixed;
  background: #ffffff;
  th, td { height: 18px; padding: 0 0 0 2px; line-height: 15px; vertical-align: top; }
  thead th {
    height: 21px;
    line-height: 18px;
    text-align: center;
    background: #f0f0f0;
    border-right: 1px solid #000000;
    border-bottom: 1px solid #000000;
  }
`;

const SpacerCell = styled.td`
  && { height: 3px; padding: 0; line-height: 0; }
`;

const SectionCell = styled.th`
  && { height: 19px; font-weight: 700; line-height: 17px; background: #9ab3cf; }
  div {
    display: flex;
    align-items: center;
    justify-content: space-between;
    padding-right: 5px;
  }
`;

const ParamName = styled.th<{ $muted?: boolean }>`
  color: ${(p) => (p.$muted ? '#888888' : '#111111')};
  white-space: nowrap;
  border-right: 1px dotted #888888;
  border-bottom: 1px dotted #888888;
`;

const ParamCell = styled.td<{ $muted?: boolean; $tight?: boolean }>`
  color: ${(p) => (p.$muted ? '#888888' : '#111111')};
  border-right: 1px dotted #888888;
  border-bottom: 1px dotted #888888;
  && { ${(p) => p.$tight && 'padding: 0;'} }
`;

const ScrollTrack = styled.div`
  flex: none;
  width: 18px;
  height: 100%;
  padding: 17px 0 0 9px;
  &::after {
    content: "";
    display: block;
    width: 2px;
    height: 361px;
    background: #858585;
  }
`;

const ToolStrip = styled.div`
  display: flex;
  align-items: center;
  justify-content: space-between;
  height: 22px;
  margin-top: 11px;
`;

const ToolSet = styled.div`
  display: flex;
  margin-left: -3px;
`;

const SortSet = styled.div`
  display: flex;
  margin-left: 13px;
`;

const DialogFooter = styled.div`
  display: flex;
  align-items: center;
  justify-content: space-between;
  margin-top: 14px;
  a { margin-bottom: 10px; }
`;

const ButtonSet = styled.div`
  display: flex;
  gap: 8px;
`;

const SizeGrip = styled.svg`
  position: absolute;
  right: 2px;
  bottom: 2px;
  width: 9px;
  height: 9px;
  fill: #b5b5b5;
`;

/* ---------- data ---------- */

type Tool = { art: string; label: string; arrow?: 'side' | 'below' };
type Panel = { title: string; width: number; tools: Tool[]; accent?: boolean };

const panels: Panel[] = [
  { title: 'Forms', width: 274, tools: [
    { art: 'extrusion', label: 'Extrusion' }, { art: 'blend', label: 'Blend' }, { art: 'revolve', label: 'Revolve' },
    { art: 'sweep', label: 'Sweep' }, { art: 'swept', label: 'Swept\nBlend' }, { art: 'voids', label: 'Void\nForms', arrow: 'side' }] },
  { title: 'Model', width: 261, tools: [
    { art: 'line', label: 'Model\nLine' }, { art: 'component', label: 'Component' }, { art: 'mtext', label: 'Model\nText' },
    { art: 'opening', label: 'Opening' }, { art: 'group', label: 'Model\nGroup', arrow: 'side' }] },
  { title: 'Control', width: 52, tools: [{ art: 'control', label: 'Control' }] },
  { title: 'Connectors', width: 316, tools: [
    { art: 'electrical', label: 'Electrical\nConnector' }, { art: 'duct', label: 'Duct\nConnector' }, { art: 'pipe', label: 'Pipe\nConnector' },
    { art: 'tray', label: 'Cable Tray\nConnector' }, { art: 'conduit', label: 'Conduit\nConnector' }] },
  { title: 'Datum', width: 123, tools: [{ art: 'refline', label: 'Reference\nLine' }, { art: 'refplane', label: 'Reference\nPlane' }] },
  { title: 'Work Plane', width: 125, tools: [
    { art: 'set', label: 'Set', arrow: 'below' }, { art: 'show', label: 'Show' }, { art: 'viewer', label: 'Viewer' }] },
  { title: 'Family Editor', width: 156, accent: true, tools: [
    { art: 'load', label: 'Load into\nProject' }, { art: 'loadclose', label: 'Load into\nProject and Close' }] },
];

const tabs = ['Insert', 'Annotate', 'View', 'Manage', 'Add-Ins', 'Enscape™', 'D5 Render', 'pyRevit', 'Boracity', 'Modify'];

const quickItems: string[] = [
  'open', 'save', 'cloud', '>', 'undo', '>', 'redo', '>', 'print', 'pdf', '|', 'align', '|', 'measure', '>', 'dim', 'tag', 'text',
  '|', 'house', '>', 'section', 'thin', '|', 'close', 'windows', '>',
];

const n = 'transparent';
const tiles = [
  '#c5c5c5', '#a3a5a5', '#c8cbcf', '#9aa6c8', '#c3c5c9', '#bbbbbb', '#b4b4b4', '#c2c2c2', n, '#c5c5c5', '#c0c3c8', '#b0b5be', '#c5c8ce', '#afb9d2', '#c3c5c9',
  n, '#b8babc', '#b0b2b6', '#9aa6c8', '#c0c1c3', '#bdbdbd', '#c1c1c1', '#c8c8c8', n, n, n, '#a3a8ae', n, '#bac1d0', '#c4c6ca',
];

type Param = { name: string; value?: React.ReactNode; formula?: string; lock?: boolean; muted?: boolean; input?: boolean };
const sections: { title: string; rows: Param[] }[] = [
  { title: 'Construction', rows: [
    { name: 'Wall Closure', value: 'By host', input: true }, { name: 'Construction Type' }, { name: 'Window Inset (default)', value: '15.9', lock: true }] },
  { title: 'Materials and Finishes', rows: [
    { name: 'Frame Material', value: 'Aluminium' }, { name: 'Glass Panel Material', value: 'Reflective glass' }] },
  { title: 'Dimensions', rows: [
    { name: 'Width', value: '1550.0', lock: true }, { name: 'Height', value: '1200.0', lock: true },
    { name: 'Rough Width', value: '1565.0', formula: ' Width + 15 mm', lock: true },
    { name: 'Rough Height', value: '1215.0', formula: ' Height + 15 mm', lock: true },
    { name: 'Transom Height Ratio', value: '0.300000' }] },
  { title: 'Analytical Properties', rows: [
    { name: 'Analytic Construction', value: 'Double glazing - domestic' }, { name: 'Define Thermal Properties by' },
    { name: 'Visual Light Transmittance', value: '0.810000' }, { name: 'Solar Heat Gain Coefficient', value: '0.760000' },
    { name: 'Thermal Resistance (R)', value: '0.3196 (m²·K)/W', muted: true }, { name: 'Heat Transfer Coefficient (U)', value: '3.1293 W/(m²·K)' }] },
  { title: 'IFC Parameters', rows: [{ name: 'Export Type to IFC As' }, { name: 'Type IFC Predefined Type' }, { name: 'Operation' }] },
  { title: 'Other', rows: [{ name: 'Default Sill Height', value: '900.0', lock: true }, { name: '' }] },
];

/* ---------- parts ---------- */

const Chevron = () => (
  <Drawing $size={10} viewBox="0 0 10 10" aria-hidden="true"><path d="M1 3l4 4 4-4" stroke="#666666" /></Drawing>
);

const Magnifier = () => (
  <Drawing $size={18} viewBox="0 0 18 18" aria-hidden="true">
    <circle cx="8" cy="7" r="5" fill="#dcecf5" stroke="#66757f" /><path d="M12 11l4 5" stroke="#444444" strokeWidth="2.500" />
  </Drawing>
);

function Ribbon() {
  return (
    <RibbonBar>
      <PanelBox $width={57}>
        <PanelTools>
          <ToolButton><Drawing $size={32} viewBox="0 0 32 32">{ribbonArt.modify}</Drawing><ToolLabel>Modify</ToolLabel></ToolButton>
        </PanelTools>
        <PanelTitle>Select <Caret color="#333333" /></PanelTitle>
      </PanelBox>
      <PanelBox $width={83}>
        <PanelTools>
          <SmallTools>
            {['ptypes', 'pcategory', 'props', 'pgrid'].map((k) => (
              <SmallTool key={k} $on={k === 'props'} aria-label={k}><Drawing $size={32} viewBox="0 0 32 32">{ribbonArt[k]}</Drawing></SmallTool>
            ))}
          </SmallTools>
        </PanelTools>
        <PanelTitle>Properties</PanelTitle>
      </PanelBox>
      {panels.map((p) => (
        <PanelBox key={p.title} $width={p.width}>
          <PanelTools $arrow={p.tools.some((t) => t.arrow === 'side')}>
            {p.tools.map((t) => (
              <ToolButton key={t.label}>
                <Drawing $size={32} viewBox="0 0 32 32">{ribbonArt[t.art]}</Drawing>
                <ToolLabel>{t.label}</ToolLabel>
                {t.arrow === 'side' && <CornerArrow><Caret /></CornerArrow>}
                {t.arrow === 'below' && <Caret />}
              </ToolButton>
            ))}
          </PanelTools>
          <PanelTitle $accent={p.accent}>{p.title}</PanelTitle>
        </PanelBox>
      ))}
    </RibbonBar>
  );
}

function PropertiesPalette() {
  const group = (title: string) => (
    <tr><GroupCell colSpan={2}><div>{title}<Collapse /></div></GroupCell></tr>
  );
  return (
    <>
      <PaletteTitle>Properties</PaletteTitle>
      <TypeSelector aria-label="Type selector">
        <Drawing $size={66} viewBox="0 0 66 66">
          <rect x=".5" y=".5" width="65" height="65" fill="#f4f4f4" stroke="#d8d8d8" />
          <path d="M9 46h55V11H58v35z" fill="#8c8c8c" stroke="none" />
          <path d="M3 6l9-5h46v45H12L3 51z" fill="#a9a9a9" stroke="none" />
          <path d="M3 6l9-5v45l-9 6z" fill="#bdbdbd" stroke="none" />
          <rect x="9" y="46" width="55" height="19" rx="2" fill="#8a8a8a" stroke="none" />
          <text x="26" y="36" fontSize="35" fontWeight="700" fill="#ffffff" stroke="none">R</text>
        </Drawing>
        <Caret color="#999999" />
      </TypeSelector>
      <TypeRow>
        <SelectBox>
          <select aria-label="Family"><option>Family: Windows</option></select>
          <Chevron />
        </SelectBox>
        <EditType>
          <Drawing $size={17} viewBox="0 0 32 32" strokeWidth="2">{ribbonArt.ptypes}</Drawing>
          Edit Type
        </EditType>
      </TypeRow>
      <PropertyArea>
        <PropertyTable>
          <colgroup><col style={{ width: 108 }} /><col /></colgroup>
          <tbody>
            {group('Constraints')}
            <tr><NameCell $muted>Host</NameCell><FieldCell $muted>Wall</FieldCell></tr>
            {group('Identity Data')}
            <tr>
              <NameCell>OmniClass Num...</NameCell>
              <FieldCell $boxed><CellInput aria-label="OmniClass Number" defaultValue="23.30.20.00" /></FieldCell>
            </tr>
            <tr><NameCell $muted>OmniClass Title</NameCell><FieldCell $muted>Windows</FieldCell></tr>
            {group('Other')}
            {['Always vertical', 'Cut with Voids ...', 'Shared', 'Room Calculatio...'].map((name, i) => (
              <tr key={name}>
                <NameCell><label htmlFor={`prop-${i}`}>{name}</label></NameCell>
                <FieldCell><Check id={`prop-${i}`} type="checkbox" defaultChecked={i === 0} /></FieldCell>
              </tr>
            ))}
          </tbody>
        </PropertyTable>
      </PropertyArea>
      <HelpRow>
        <HelpLink href="#help">Properties help</HelpLink>
        <PushButton $width={72} $tone="disabled" disabled>Apply</PushButton>
      </HelpRow>
    </>
  );
}

function ProjectBrowser() {
  const icon = (k: string) => <Drawing $size={18} viewBox="0 0 18 18">{treeArt[k]}</Drawing>;
  return (
    <>
      <PaletteTitle>Project Browser - revit-window-casem...</PaletteTitle>
      <Tree>
        <TreeRow><Branch from={10} arm box="-" />{icon('views')}<TreeLabel $selected>Views (all)</TreeLabel></TreeRow>
        {['Floor Plans', 'Ceiling Plans', '3D Views', 'Elevations (Elevation 1)'].map((name, i) => (
          <TreeRow key={name}><Branch /><Branch to={i === 3 ? 10 : 18} arm box="+" /><TreeLabel $child>{name}</TreeLabel></TreeRow>
        ))}
        <TreeRow><Branch arm />{icon('sheets')}<TreeLabel>Sheets (all)</TreeLabel></TreeRow>
        <TreeRow><Branch arm box="+" />{icon('families')}<TreeLabel>Families</TreeLabel></TreeRow>
        <TreeRow><Branch arm box="+" />{icon('groups')}<TreeLabel>Groups</TreeLabel></TreeRow>
        <TreeRow><Branch to={10} arm />{icon('links')}<TreeLabel>Revit Links</TreeLabel></TreeRow>
      </Tree>
    </>
  );
}

const GLASS = '#b1ced2';
const DARK = '#636564';
const PALE = '#e4e4e5';

const Model = () => (
  <WindowModel viewBox="0 0 1350 1568" preserveAspectRatio="none" aria-label="Casement window">
    <path d="M62 606L1190 39l107 56L173 660z" fill="#ffffff" />
    <path d="M62 606l111 54v876l-111-55z" fill={DARK} />
    <path d="M173 660L1297 95v876L173 1536z" fill={PALE} />
    <path d="M191 668L1280 121v841L191 1508z" fill="#ffffff" />
    {/* left casement */}
    <path d="M191 668L442 543v755L191 1421z" fill={PALE} />
    <path d="M191 668L442 543v147L191 817z" fill={GLASS} />
    <path d="M191 815L442 688M191 849L442 724" />
    <path d="M191 880L419 765v518L191 1396z" fill={GLASS} />
    <path d="M417 767v516L191 1392" strokeWidth="1" />
    <path d="M442 543l37-18v796l-37-24z" fill={DARK} />
    {/* middle light */}
    <path d="M524 503L821 353v751L524 1253z" fill={GLASS} />
    <path d="M821 353l42-21v790l-42-18z" fill={DARK} />
    {/* right casement */}
    <path d="M908 308l284-143v754L908 1060z" fill={PALE} />
    <path d="M908 308l284-143v149L908 456z" fill={GLASS} />
    <path d="M908 453l284-142M908 488l284-141" />
    <path d="M908 518l261-131v520L908 1036z" fill={GLASS} />
    <path d="M1166 389v516L908 1033" />
    <path d="M1192 165l37-18v791l-37-19z" fill={DARK} />
    <path d="M1229 147l8-4v799l-8-4z" fill={PALE} />
    <path d="M1237 143l43-22v841l-43-21z" fill={DARK} />
    {/* sill tracks */}
    <path d="M191 1457L1229 937M191 1465L1237 942" />
    {/* mullions */}
    <path d="M479 525l45-22v796l-45 22zM863 331l45-23v798l-45 23z" fill={PALE} />
  </WindowModel>
);

const Cube = () => (
  <ViewCube viewBox="0 0 96 100" aria-label="View cube">
    <defs>
      <radialGradient id="cubeShade"><stop offset="0.4" stopColor="#000000" stopOpacity=".35" /><stop offset="1" stopColor="#000000" stopOpacity="0" /></radialGradient>
    </defs>
    <ellipse cx="50" cy="74" rx="42" ry="22" fill="url(#cubeShade)" />
    <g stroke="#8c8c8c" strokeDasharray="3 1">
      <path d="M14 26L50 10l36 16-36 20z" fill="#ececec" />
      <path d="M14 26l36 20v42L18 65z" fill="#ebebeb" />
      <path d="M86 26L50 46v42l32-24z" fill="#e4e4e4" />
    </g>
    <g fill="#8a8a8a" fontFamily="Liberation Sans, sans-serif" fontSize="8" fontWeight="700">
      <text transform="translate(23 58) skewY(25)">LEFT</text>
      <text transform="translate(55 71) skewY(-29)">FRONT</text>
      <text transform="translate(43 33) rotate(-28)">TOP</text>
    </g>
  </ViewCube>
);

function FamilyTypes({ onClose }: { onClose: () => void }) {
  return (
    <Dialog role="dialog" aria-labelledby="family-types-title">
      <DialogTitle>
        <h2 id="family-types-title">Family Types</h2>
        <button aria-label="Close" onClick={onClose}>
          <Drawing $size={10} viewBox="0 0 10 10"><path d="M0 0l10 10M10 0L0 10" stroke="#111111" strokeWidth="1.2" /></Drawing>
        </button>
      </DialogTitle>
      <DialogBody>
        <NameRow>
          <label htmlFor="type-name">Type name:</label>
          <SelectBox $grow>
            <select id="type-name"><option>1550 x 1200mm</option></select>
            <Chevron />
          </SelectBox>
          <NameActions>
            {['newType', 'rename', 'deleteType'].map((k) => (
              <IconButton key={k} aria-label={k}><Drawing $size={18} viewBox="0 0 20 20">{dialogArt[k]}</Drawing></IconButton>
            ))}
          </NameActions>
        </NameRow>
        <SearchBox>
          <input type="text" placeholder="Search parameters" aria-label="Search parameters" />
          <Magnifier />
        </SearchBox>
        <GridFrame>
          <ParameterGrid>
            <colgroup><col style={{ width: 170 }} /><col style={{ width: 173 }} /><col style={{ width: 180 }} /><col /></colgroup>
            <thead><tr><th>Parameter</th><th>Value</th><th>Formula</th><th>Lock</th></tr></thead>
            {sections.map((s) => (
              <tbody key={s.title}>
                <tr><SpacerCell colSpan={4} /></tr>
                <tr><SectionCell colSpan={4}><div>{s.title}<Collapse /></div></SectionCell></tr>
                {s.rows.map((r) => (
                  <tr key={r.name}>
                    <ParamName $muted={r.muted}>{r.name}</ParamName>
                    <ParamCell $muted={r.muted} $tight={r.input}>
                      {r.input ? <CellInput aria-label={r.name} defaultValue={String(r.value)} /> : r.value}
                    </ParamCell>
                    <ParamCell>{r.name && '='}{r.formula}</ParamCell>
                    <ParamCell>{r.lock && <Check type="checkbox" defaultChecked aria-label={`Lock ${r.name}`} />}</ParamCell>
                  </tr>
                ))}
              </tbody>
            ))}
          </ParameterGrid>
          <ScrollTrack />
        </GridFrame>
        <ToolStrip>
          <ToolSet>
            {['pencil', 'newType', 'shared', 'del', 'copy', 'up', 'down'].map((k) => (
              <IconButton key={k} aria-label={k}><Drawing $size={18} viewBox="0 0 20 20">{dialogArt[k]}</Drawing></IconButton>
            ))}
            <SortSet>
              {['az', 'za'].map((k) => (
                <IconButton key={k} aria-label={k}><Drawing $size={18} viewBox="0 0 20 20">{dialogArt[k]}</Drawing></IconButton>
              ))}
            </SortSet>
          </ToolSet>
          <PushButton $width={124}>Manage Lookup Tables</PushButton>
        </ToolStrip>
        <DialogFooter>
          <HelpLink $small href="#family-types">How do I manage family types?</HelpLink>
          <ButtonSet>
            <PushButton $width={76} $tone="primary" onClick={onClose}>OK</PushButton>
            <PushButton $width={76} onClick={onClose}>Cancel</PushButton>
            <PushButton $width={76}>Apply</PushButton>
          </ButtonSet>
        </DialogFooter>
      </DialogBody>
      <SizeGrip viewBox="0 0 9 9"><path d="M6 0h2v2H6zM6 3h2v2H6zM3 3h2v2H3zM6 6h2v2H6zM3 6h2v2H3zM0 6h2v2H0z" /></SizeGrip>
    </Dialog>
  );
}

export default function App() {
  const [open, setOpen] = useState(true);
  return (
    <Shell>
      <GlobalStyle />
      <TitleBar>
        <QuickAccess>
          <AppMark>R</AppMark>
          <QuickButton $wide aria-label="home"><Drawing $size={18} viewBox="0 0 20 20">{quickArt.home}</Drawing></QuickButton>
          {quickItems.map((k, i) => {
            if (k === '|') return <QuickRule key={i} />;
            if (k === '>') return <QuickArrow key={i} aria-label="more"><Caret /></QuickArrow>;
            return <QuickButton key={i} aria-label={k}><Drawing $size={18} viewBox="0 0 20 20">{quickArt[k]}</Drawing></QuickButton>;
          })}
          <QuickArrow aria-label="customize">
            <Drawing $size={9} viewBox="0 0 9 9"><path d="M1 1.500h7" /><path d="M1 4h7L4.500 8z" fill="currentColor" stroke="none" /></Drawing>
          </QuickArrow>
        </QuickAccess>
        <Caption>Autodesk Revit 2023.1 - revit-window-casement-triple - 3D View: {'{3D}'}</Caption>
        <Mosaic>{tiles.map((t, i) => <Tile key={i} $tone={t} />)}</Mosaic>
        <WindowButton aria-label="Minimize"><Drawing $size={12} viewBox="0 0 12 12"><path d="M2 11h8" strokeWidth="2" /></Drawing></WindowButton>
        <WindowButton aria-label="Restore"><Drawing $size={12} viewBox="0 0 12 12"><path d="M4 4V1h8v6H9M1 5h8v6H1zM1 6h8M4 2h8" /></Drawing></WindowButton>
        <WindowButton aria-label="Close"><Drawing $size={12} viewBox="0 0 12 12"><path d="M1 1l9 10M10 1L1 11" strokeWidth="2" /></Drawing></WindowButton>
      </TitleBar>
      <TabRow>
        <RibbonTab $kind="file">File</RibbonTab>
        <RibbonTab $kind="active">Create</RibbonTab>
        {tabs.map((t) => <RibbonTab key={t}>{t}</RibbonTab>)}
        <TabToggle aria-label="Minimize ribbon">
          <Drawing $size={16} viewBox="0 0 16 16"><rect x="1" y="4" width="14" height="8" rx="2" fill="#f2f2f2" stroke="#555555" /><path d="M6 9l2-3 2 3z" fill="#333333" stroke="none" /></Drawing>
          <Caret />
        </TabToggle>
      </TabRow>
      <Ribbon />
      <OptionsBar />
      <Workspace>
        <Palettes>
          <PropertiesPalette />
          <ProjectBrowser />
        </Palettes>
        <ViewColumn>
          <ViewTabs>
            <ViewTab>
              <Drawing $size={16} viewBox="0 0 16 16"><path d="M1 6l6-5 7 3 1 4-1 4-7 3-5-3z" fill="#dfe4ea" stroke="#333d49" /><path d="M1 6l7 2 6-4M8 8v7M3 9h3v4" stroke="#333d49" /></Drawing>
              <span>{'{3D}'}</span>
              <button aria-label="Close view"><Drawing $size={10} viewBox="0 0 10 10"><path d="M1 1l8 8M9 1L1 9" stroke="#222222" strokeWidth="1.8" /></Drawing></button>
            </ViewTab>
            <Drawing $size={9} viewBox="0 0 9 9"><path d="M1 1.500h7" /><path d="M1 4h7L4.500 8z" fill="currentColor" stroke="none" /></Drawing>
          </ViewTabs>
          <CanvasRow>
            <Canvas>
              <Model />
              <Cube />
              <NavBar>
                <NavCorner aria-label="Close navigation bar"><Drawing $size={10} viewBox="0 0 10 10"><circle cx="5" cy="5" r="4" fill="#999999" stroke="none" /><path d="M3 3l4 4M7 3L3 7" stroke="#ffffff" /></Drawing></NavCorner>
                <button aria-label="Wheel">
                  <Drawing $size={26} viewBox="0 0 26 26"><path d="M2 12c0-6 3-9 9-9h6c3 0 4 1 4 4v6c0 6-3 8-9 8s-10-3-10-9z" fill="#efefef" /><circle cx="12" cy="12" r="5" /><path d="M9 16l-4 4" /><path d="M14 18l3-3h8v7l-3 3h-8z" fill="#a9c8ee" stroke="#7fa3d1" /></Drawing>
                </button>
                <Caret color="#888888" />
                <hr />
                <button aria-label="Zoom">
                  <Drawing $size={20} viewBox="0 0 20 20"><rect x="2" y="2" width="11" height="11" fill="#a9cf93" stroke="#8fb07e" /><circle cx="13" cy="12" r="3" fill="#eeeeee" /><path d="M15 15l3 3" strokeWidth="2" /></Drawing>
                </button>
                <Caret color="#888888" />
                <NavCorner aria-label="Options"><Drawing $size={10} viewBox="0 0 10 10"><circle cx="5" cy="5" r="4" fill="#999999" stroke="none" /><path d="M3 5h4" stroke="#ffffff" /></Drawing></NavCorner>
              </NavBar>
            </Canvas>
            <RightRail />
          </CanvasRow>
          <ViewControls>
            <ScaleText>1:5</ScaleText>
            {Object.keys(viewArt).map((k) => (
              <ControlButton key={k} aria-label={k}><Drawing $size={16} viewBox="0 0 18 18">{viewArt[k]}</Drawing></ControlButton>
            ))}
            <BottomRail />
          </ViewControls>
        </ViewColumn>
      </Workspace>
      <StatusBar>
        Ready
        <StatusIcons>
          {Object.keys(statusArt).map((k) => <Drawing key={k} $size={18} viewBox="0 0 18 18">{statusArt[k]}</Drawing>)}
          <span>
            <Drawing $size={18} viewBox="0 0 18 18"><path d="M2 2h14l-5 7v6l-4 1V9z" fill="#dfe4ec" stroke="#4c566b" /></Drawing>
            :0
          </span>
        </StatusIcons>
      </StatusBar>
      <Taskbar>
        <TaskHint $width={11} $gap={0} $tone="#d79aa4" />
        <TaskHint $width={18} $gap={1095} $tone="#5fb0d8" />
        <TaskHint $width={40} $gap={50} $tone="#3d403d" />
      </Taskbar>
      {open && <FamilyTypes onClose={() => setOpen(false)} />}
    </Shell>
  );
}
